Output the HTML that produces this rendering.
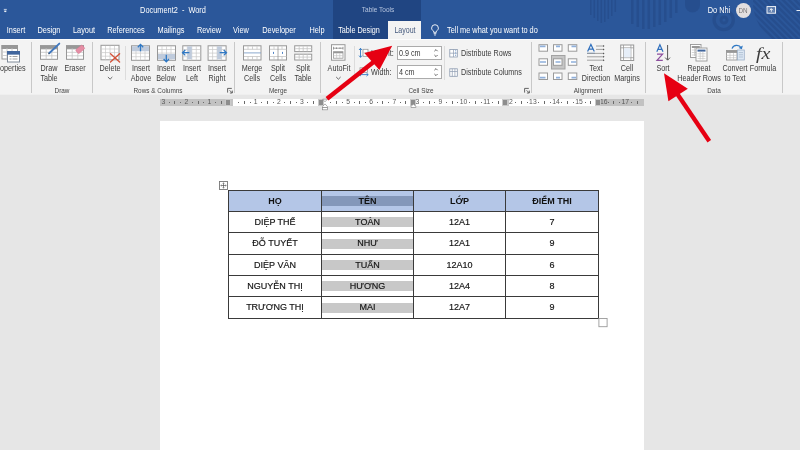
<!DOCTYPE html>
<html>
<head>
<meta charset="utf-8">
<title>Document2 - Word</title>
<style>
*{box-sizing:border-box;margin:0;padding:0}
html,body{width:800px;height:450px;overflow:hidden;background:#e6e6e6;font-family:"Liberation Sans",sans-serif;}
#app{will-change:transform;position:relative;width:800px;height:450px;overflow:hidden;background:#e6e6e6}
.abs{position:absolute}
/* title + tabs */
#title{position:absolute;left:0;top:0;width:800px;height:39.3px;background:#2b579a;overflow:hidden}
#tt{position:absolute;left:333px;top:0;width:88.4px;height:40px;background:#204582}
#laytab{position:absolute;left:388px;top:21px;width:33.4px;height:20px;background:#f3f3f3}
.c{position:absolute;transform:translate(-50%,-50%) scaleX(var(--sx,1));white-space:nowrap;line-height:1}
.l{position:absolute;transform-origin:0 50%;transform:translate(0,-50%) scaleX(var(--sx,1));white-space:nowrap;line-height:1}
.tab{font-size:8.4px;color:#fff;--sx:.878}
.ttl{font-size:8.2px;color:#fff;--sx:.9}
/* ribbon */
#ribbon{position:absolute;left:0;top:39px;width:800px;height:56.4px;background:#f3f3f3;border-bottom:1px solid #efefef;border-top:1.4px solid #fcfcfc}
.rl{font-size:8.2px;color:#3b3b3b;--sx:.88}
.gl{font-size:7.3px;color:#444;--sx:.875}
.sep{position:absolute;width:1px;background:#c8c8c8;top:42px;height:51px}
.sep2{position:absolute;width:1px;background:#dcdcdc;top:46px;height:34px}
.inp{position:absolute;left:397px;width:45px;height:14px;background:#fff;border:1px solid #ababab}
/* ruler */
#ruler{position:absolute;left:160px;top:98.5px;width:484px;height:7.5px;background:#fff}
.rg{position:absolute;top:0;height:7.5px;background:#c2c2c2}
.tk{position:absolute;top:2.2px;width:1px;height:3px;background:#6a6a6a}
.dt{position:absolute;top:3.2px;width:1px;height:1px;background:#6a6a6a}
.mk{position:absolute;top:0;width:6.6px;height:7.5px;background:#c9c9c9}
.mk:after{content:'';position:absolute;left:1.1px;top:1.1px;width:4.4px;height:5.3px;background:#8d8d8d}
.rn{position:absolute;top:3.5px;transform:translate(-50%,-50%);font-size:6.8px;color:#595959;line-height:1}
/* page */
#page{position:absolute;left:160px;top:121px;width:484px;height:340px;background:#fff}
table{position:absolute;left:228px;top:189.6px;border-collapse:collapse;table-layout:fixed;width:371px}
td{border:1px solid #3a3a3a;height:21.33px;text-align:center;vertical-align:middle;font-size:9px;color:#111;padding:1px 0 0 0;position:relative;line-height:1}
tr.h td{background:#b4c6e7;font-weight:bold;-webkit-text-stroke:0}
td{-webkit-text-stroke:0.18px #222}
.band{position:absolute;left:0;right:0;top:5.5px;height:10px;background:#c8c8c8}
tr.h .band{background:#8497b9}
td span{position:relative}
</style>
</head>
<body>
<div id="app">

<!-- ===== title bar / tabs ===== -->
<div id="title">
  <div id="tt"></div>
  <div id="laytab"></div>
</div>
<svg class="abs" style="left:0;top:0" width="800" height="40" viewBox="0 0 800 40">
  <defs><clipPath id="dc"><circle cx="800" cy="2" r="47"/></clipPath></defs>
  <g fill="#254c8b" opacity="0.75">
    <rect x="590" y="0" width="1.6" height="15"/><rect x="593.5" y="0" width="1.6" height="18"/><rect x="597" y="0" width="1.6" height="21"/><rect x="600.5" y="0" width="1.6" height="23"/><rect x="604" y="0" width="1.6" height="22"/><rect x="607.5" y="0" width="1.6" height="19"/><rect x="611" y="0" width="1.6" height="16"/><rect x="614.5" y="0" width="1.6" height="12"/>
    <rect x="631" y="0" width="2.6" height="24"/><rect x="636.5" y="0" width="2.6" height="27"/><rect x="642" y="0" width="2.6" height="29"/><rect x="647.5" y="0" width="2.6" height="29"/><rect x="653" y="0" width="2.6" height="27"/><rect x="658.5" y="0" width="2.6" height="25"/><rect x="664" y="0" width="2.6" height="22"/><rect x="669.5" y="0" width="2.6" height="18"/><rect x="675" y="0" width="2.6" height="13"/>
    <path d="M685 0h15v5a7.5 7.5 0 0 1-15 0z"/>
  </g>
  <g fill="none" stroke="#254c8b" opacity="0.75">
    <circle cx="724" cy="20" r="3" stroke-width="3"/>
    <circle cx="723.7" cy="20" r="9.6" stroke-width="3.4"/>
    <g clip-path="url(#dc)" stroke-width="2.6"><path d="M730 -5l60 60"/><path d="M736 -5l60 60"/><path d="M742 -5l60 60"/><path d="M748 -5l60 60"/><path d="M754 -5l60 60"/><path d="M760 -5l60 60"/><path d="M766 -5l60 60"/><path d="M772 -5l60 60"/><path d="M778 -5l60 60"/><path d="M784 -5l60 60"/><path d="M790 -5l60 60"/><path d="M796 -5l60 60"/></g>
  </g>
</svg>
<div class="c ttl" style="left:173.3px;top:10.8px">Document2&nbsp; -&nbsp; Word</div>
<div class="c" style="left:378px;top:10px;font-size:7.3px;color:#b6c5df;--sx:.89">Table Tools</div>
<div class="c ttl" style="left:718.5px;top:10.5px">Do Nhi</div>
<div class="abs" style="left:735.5px;top:3px;width:15px;height:15px;border-radius:50%;background:#e3dfdf"></div>
<div class="c" style="left:743px;top:10.7px;font-size:6.3px;color:#7a7777">DN</div>

<div class="c tab" style="left:16px;top:30px">Insert</div>
<div class="c tab" style="left:49px;top:30px">Design</div>
<div class="c tab" style="left:84px;top:30px">Layout</div>
<div class="c tab" style="left:126px;top:30px">References</div>
<div class="c tab" style="left:170.5px;top:30px">Mailings</div>
<div class="c tab" style="left:208.5px;top:30px">Review</div>
<div class="c tab" style="left:241px;top:30px">View</div>
<div class="c tab" style="left:279px;top:30px">Developer</div>
<div class="c tab" style="left:317px;top:30px">Help</div>
<div class="c tab" style="left:359.3px;top:30px;--sx:.86">Table Design</div>
<div class="c tab" style="left:404.5px;top:30.2px;color:#44587c;--sx:.84">Layout</div>
<div class="l tab" style="left:446.8px;top:30px">Tell me what you want to do</div>

<!-- ===== ribbon ===== -->
<div id="ribbon"></div>
<!-- ribbon separators -->
<div class="sep" style="left:31px"></div>
<div class="sep" style="left:92px"></div>
<div class="sep" style="left:234px"></div>
<div class="sep" style="left:320px"></div>
<div class="sep" style="left:531px"></div>
<div class="sep" style="left:645px"></div>
<div class="sep" style="left:782px"></div>
<div class="sep2" style="left:125px"></div>
<div class="sep2" style="left:354px"></div>
<div class="sep2" style="left:444px"></div>

<div class="inp" style="top:46px"></div>
<div class="inp" style="top:65.2px"></div>
<!-- ribbon icons -->
<svg class="abs" style="left:0;top:0" width="800" height="100" viewBox="0 0 800 100">
<defs>
  <g id="grid">
    <rect x="0.5" y="0.5" width="18" height="14.5" fill="#fff" stroke="#979797" stroke-width="1"/>
    <path d="M5 1V15M9.5 1V15M14 1V15M1 4.2H18M1 7.8H18M1 11.4H18" stroke="#c8c8c8" stroke-width="0.7" fill="none"/>
  </g>
  <g id="hgrid">
    <rect x="0.5" y="0.5" width="17" height="13.5" fill="#fff" stroke="#979797" stroke-width="1"/>
    <rect x="0.5" y="0.5" width="17" height="3" fill="#979797" stroke="#979797" stroke-width="1"/>
    <path d="M6.2 3V14M11.8 3V14M1 7H17M1 10.5H17" stroke="#c4c4c4" stroke-width="0.8" fill="none"/>
  </g>
  <g id="al">
    <rect x="0.5" y="0.5" width="8.5" height="6.5" fill="#fff" stroke="#9a9a9a" stroke-width="1"/>
  </g>
</defs>

<!-- Properties -->
<g transform="translate(1.5,45)">
  <rect x="0.5" y="0.5" width="15.5" height="13.5" fill="#fff" stroke="#979797"/>
  <rect x="0.5" y="0.5" width="15.5" height="3" fill="#979797" stroke="#979797"/>
  <path d="M5.5 3V14M10.5 3V14M1 7H16M1 10.5H16" stroke="#c4c4c4" stroke-width="0.8"/>
  <rect x="6" y="6.5" width="12" height="10.5" fill="#fff" stroke="#7f8a99"/>
  <rect x="6" y="6.5" width="12" height="2.6" fill="#41669d" stroke="#41669d"/>
  <path d="M8 11.5H10M11 11.5H16M8 14H10M11 14H16" stroke="#979797" stroke-width="0.9"/>
</g>
<!-- Draw Table -->
<use href="#hgrid" x="40" y="45.3"/>
<path d="M59.3 43.6L49.2 53.3" stroke="#4178bf" stroke-width="1.9" stroke-linecap="round"/>
<path d="M48.3 54.3l0.4-1.8 1.3 1.3z" fill="#555"/>
<!-- Eraser -->
<use href="#hgrid" x="66" y="45.3"/>
<g transform="translate(80.2,49.3) rotate(-40)"><rect x="-4.2" y="-2.4" width="8.4" height="4.8" rx="1" fill="#e58ea5" stroke="#d9748f" stroke-width="0.5"/></g>
<!-- Delete -->
<use href="#grid" x="100.5" y="44.8"/>
<path d="M110.5 53.8L119.6 62M119.6 53.8L110.5 62" stroke="#d4533a" stroke-width="1.35" stroke-linecap="round"/>
<path d="M107.9 77l2.2 2.2 2.2-2.2" fill="none" stroke="#555" stroke-width="0.9"/>
<!-- Insert Above -->
<use href="#grid" x="131" y="45.3"/>
<rect x="132" y="46.3" width="17" height="5" fill="#bfcbdc"/>
<path d="M140.5 51.3V44.6M137.8 47.2l2.7-2.8 2.7 2.8" fill="none" stroke="#2f78c4" stroke-width="1.3"/>
<!-- Insert Below -->
<use href="#grid" x="157" y="45.3"/>
<rect x="158" y="54" width="17" height="5.3" fill="#bfcbdc"/>
<path d="M166.3 54.8V61.6M163.6 59l2.7 2.8 2.7-2.8" fill="none" stroke="#2f78c4" stroke-width="1.3"/>
<!-- Insert Left -->
<use href="#grid" x="182.3" y="45.3"/>
<rect x="187.3" y="46.3" width="4.5" height="13" fill="#bfcbdc"/>
<path d="M189.4 52.7H182.6M185.3 50l-2.8 2.7 2.8 2.7" fill="none" stroke="#2f78c4" stroke-width="1.3"/>
<!-- Insert Right -->
<use href="#grid" x="207.6" y="45.3"/>
<rect x="217.1" y="46.3" width="4.5" height="13" fill="#bfcbdc"/>
<path d="M219.6 52.7H226.4M223.7 50l2.8 2.7-2.8 2.7" fill="none" stroke="#2f78c4" stroke-width="1.3"/>
<!-- launchers -->
<g id="ln" fill="none" stroke="#555" stroke-width="0.9">
  <path d="M227.6 92.6V88.4H231.8"/><path d="M229.6 90.3l2.6 2.6M232.3 90.6v2.4h-2.4"/>
</g>
<use href="#ln" x="297" y="0"/>
<!-- Merge Cells -->
<g transform="translate(243,45.3)">
  <rect x="0.5" y="0.5" width="17.5" height="14.2" fill="#fff" stroke="#979797"/>
  <path d="M1 4H18M1 11.2H18M5 1V4M9.5 1V4M14 1V4M5 11.2V15M9.5 11.2V15M14 11.2V15" stroke="#c4c4c4" stroke-width="0.8"/>
  <path d="M1 7.6H18" stroke="#7f9fc8" stroke-width="0.9"/>
</g>
<!-- Split Cells -->
<g transform="translate(269,45.3)">
  <rect x="0.5" y="0.5" width="17" height="14.2" fill="#fff" stroke="#979797"/>
  <path d="M1 4H17.5M1 11.2H17.5M5 1V4M13 1V4M5 11.2V15M13 11.2V15" stroke="#c4c4c4" stroke-width="0.8"/>
  <path d="M9 1V15" stroke="#979797" stroke-width="0.8"/>
  <path d="M4.5 6.6V8.6M13.5 6.6V8.6" stroke="#3b74bd" stroke-width="0.9"/>
</g>
<!-- Split Table -->
<g transform="translate(294.2,45.3)">
  <rect x="0.5" y="0.5" width="17" height="5.8" fill="#fff" stroke="#979797"/>
  <rect x="0.5" y="8.9" width="17" height="5.8" fill="#fff" stroke="#979797"/>
  <path d="M1 3.4H17.5M1 11.8H17.5M5 1V6M9 1V6M13 1V6M5 9V14.5M9 9V14.5M13 9V14.5" stroke="#c4c4c4" stroke-width="0.8"/>
</g>
<!-- AutoFit -->
<g transform="translate(331,44.2)">
  <rect x="0.5" y="0.5" width="13.5" height="15.5" fill="#fff" stroke="#979797"/>
  <path d="M2.5 4H12M2.5 2.6V5.4M12 2.6V5.4M5.5 3.2V4.8M9 3.2V4.8" stroke="#777" stroke-width="0.7"/>
  <rect x="2.5" y="7.5" width="9.5" height="6.5" fill="#fff" stroke="#979797" stroke-width="0.8"/>
  <rect x="2.5" y="7.5" width="9.5" height="1.6" fill="#979797"/>
  <path d="M5.6 9V14M8.8 9V14M2.5 11.5H12" stroke="#c4c4c4" stroke-width="0.7"/>
</g>
<path d="M336.2 77l2.2 2.2 2.2-2.2" fill="none" stroke="#555" stroke-width="0.9"/>
<!-- Height icon -->
<g transform="translate(359,47.8)">
  <rect x="4" y="1.5" width="5" height="7" fill="#fff" stroke="#979797" stroke-width="0.8"/>
  <path d="M4 5H9" stroke="#c4c4c4" stroke-width="0.7"/>
  <path d="M1.5 0.5V9.5M0 2.2L1.5 0.5 3 2.2M0 7.8L1.5 9.5 3 7.8" fill="none" stroke="#2f78c4" stroke-width="0.9"/>
</g>
<!-- Width icon -->
<g transform="translate(359,67.3)">
  <rect x="1" y="0.5" width="7.5" height="4.5" fill="#fff" stroke="#979797" stroke-width="0.8"/>
  <path d="M4.8 0.5V5" stroke="#c4c4c4" stroke-width="0.7"/>
  <path d="M0.3 7.3H9.2M2 5.8L0.3 7.3 2 8.8M7.5 5.8L9.2 7.3 7.5 8.8" fill="none" stroke="#2f78c4" stroke-width="0.9"/>
</g>
<!-- spinners -->
<g fill="none" stroke="#555" stroke-width="0.9">
  <path d="M434.4 51.2l1.6-1.6 1.6 1.6M434.4 55l1.6 1.6 1.6-1.6"/>
  <path d="M434.4 70.2l1.6-1.6 1.6 1.6M434.4 74l1.6 1.6 1.6-1.6"/>
</g>
<!-- Distribute rows/cols -->
<g transform="translate(449.3,49)">
  <rect x="0.5" y="0.5" width="7.5" height="7.5" fill="#fff" stroke="#8c9bb0" stroke-width="0.8"/>
  <path d="M0.5 4.2H8M4.2 0.5V8" stroke="#8c9bb0" stroke-width="0.7"/>
  <path d="M6.3 1.2V7.4" stroke="#6f97cc" stroke-width="0.8" stroke-dasharray="1 0.6"/>
</g>
<g transform="translate(449.3,68.3)">
  <rect x="0.5" y="0.5" width="7.5" height="7.5" fill="#fff" stroke="#8c9bb0" stroke-width="0.8"/>
  <path d="M0.5 3.2H8M3 0.5V8M5.6 0.5V8" stroke="#8c9bb0" stroke-width="0.7"/>
</g>
<!-- Alignment 3x3 -->
<rect x="551.5" y="55.5" width="13.5" height="13.5" fill="#c6c6c6" stroke="#a2a2a2"/>
<g>
  <use href="#al" x="538.5" y="44.2"/><use href="#al" x="553" y="44.2"/><use href="#al" x="567.8" y="44.2"/>
  <use href="#al" x="538.5" y="58.3"/><use href="#al" x="553" y="58.3"/><use href="#al" x="567.8" y="58.3"/>
  <use href="#al" x="538.5" y="72.5"/><use href="#al" x="553" y="72.5"/><use href="#al" x="567.8" y="72.5"/>
</g>
<g stroke="#8fb0dc" stroke-width="1.7">
  <path d="M540 46.3H545.5M556 46.3H560M571.5 46.3H576.2"/>
  <path d="M540 62H546M555.5 62H560.5M571 62H576.2"/>
  <path d="M540 77.6H545.5M556 77.6H560M571.5 77.6H576.2"/>
</g>
<!-- Text Direction -->
<g>
  <path d="M587.6 51.6L590.9 44.5L594.3 51.6M588.8 49.2H593" fill="none" stroke="#2f6fbd" stroke-width="1.2"/>
  <path d="M587 53.3H595" stroke="#2f6fbd" stroke-width="0.8"/>
  <path d="M596 46H603.5M596 49.4H603.5M587 53.4H603.5M587 56.8H603.5M587 60.2H603.5" stroke="#979797" stroke-width="0.9"/>
  <path d="M603 45l1.6 1-1.6 1zM603 48.4l1.6 1-1.6 1zM603 52.4l1.6 1-1.6 1zM603 55.8l1.6 1-1.6 1zM603 59.2l1.6 1-1.6 1z" fill="#555"/>
</g>
<!-- Cell Margins -->
<g transform="translate(620.2,44.5)">
  <rect x="0.5" y="0.5" width="13" height="15.5" fill="#fff" stroke="#979797"/>
  <path d="M3.3 0.5V16M10.7 0.5V16M0.5 3.3H13.5M0.5 13.2H13.5" stroke="#9a9a9a" stroke-width="0.8"/>
  <rect x="3.7" y="3.7" width="6.6" height="9.1" fill="#e6eef8"/>
</g>
<!-- Sort -->
<g>
  <path d="M656.8 51.8L659.9 44.8L663 51.8M658 49.4H661.8" fill="none" stroke="#2f6fbd" stroke-width="1.2"/>
  <path d="M657 54.2H662.6L657 60.3H662.8" fill="none" stroke="#8d4f9e" stroke-width="1.2"/>
  <path d="M667.6 45V60M665.2 57.6l2.4 2.6 2.4-2.6" fill="none" stroke="#555" stroke-width="1"/>
</g>
<!-- Repeat Header Rows -->
<g transform="translate(690,44)">
  <rect x="0.5" y="0.5" width="10.5" height="13" fill="#fff" stroke="#979797" stroke-width="0.9"/>
  <rect x="1.8" y="2" width="8" height="2" fill="#979797"/>
  <path d="M1.8 6H9.8M1.8 8.5H9.8M1.8 11H9.8M4.5 4V12M7.2 4V12" stroke="#c4c4c4" stroke-width="0.7"/>
  <rect x="6" y="4" width="11" height="13" fill="#fff" stroke="#979797" stroke-width="0.9"/>
  <rect x="7.5" y="5.6" width="8" height="2" fill="#41669d"/>
  <path d="M7.5 9.8H15.5M7.5 12.2H15.5M7.5 14.6H15.5M10.2 7.6V15.6M12.9 7.6V15.6" stroke="#c4c4c4" stroke-width="0.7"/>
</g>
<!-- Convert to Text -->
<g transform="translate(726,44)">
  <rect x="0.5" y="6.5" width="10.5" height="9.5" fill="#fff" stroke="#979797" stroke-width="0.9"/>
  <rect x="0.5" y="6.5" width="10.5" height="2.4" fill="#979797"/>
  <path d="M0.5 11.3H11M0.5 13.7H11M4 9V16M7.5 9V16" stroke="#c4c4c4" stroke-width="0.7"/>
  <rect x="11.5" y="6" width="6.8" height="10" fill="#dde8f4" stroke="#9fb1c8" stroke-width="0.8"/>
  <path d="M12.8 8.6H17M12.8 10.8H17M12.8 13H17" stroke="#9fb1c8" stroke-width="0.7"/>
  <path d="M6 4.6C7.5 0.8 13 0.2 15.3 4" fill="none" stroke="#2f78c4" stroke-width="1.2"/>
  <path d="M16.8 1.6L15.9 5.2 12.6 4z" fill="#2f78c4"/>
</g>
<!-- Formula fx -->
<text x="756" y="58.6" font-family="Liberation Serif, serif" font-style="italic" font-size="17.5" fill="#3d3d3d" textLength="14.5" lengthAdjust="spacingAndGlyphs">fx</text>
</svg>

<!-- ribbon labels -->
<div class="l rl" style="left:0px;top:69.3px">operties</div>
<div class="c rl" style="left:49.3px;top:69.3px">Draw</div>
<div class="c rl" style="left:49.3px;top:78.7px">Table</div>
<div class="c rl" style="left:75.1px;top:69.3px">Eraser</div>
<div class="c rl" style="left:110.2px;top:69.3px">Delete</div>
<div class="c rl" style="left:140.7px;top:69.3px">Insert</div>
<div class="c rl" style="left:140.7px;top:78.7px">Above</div>
<div class="c rl" style="left:166.2px;top:69.3px">Insert</div>
<div class="c rl" style="left:166.2px;top:78.7px">Below</div>
<div class="c rl" style="left:191.7px;top:69.3px">Insert</div>
<div class="c rl" style="left:191.7px;top:78.7px">Left</div>
<div class="c rl" style="left:217.2px;top:69.3px">Insert</div>
<div class="c rl" style="left:217.2px;top:78.7px">Right</div>
<div class="c rl" style="left:252px;top:69.3px">Merge</div>
<div class="c rl" style="left:252px;top:78.7px">Cells</div>
<div class="c rl" style="left:277.6px;top:69.3px">Split</div>
<div class="c rl" style="left:277.6px;top:78.7px">Cells</div>
<div class="c rl" style="left:303.2px;top:69.3px">Split</div>
<div class="c rl" style="left:303.2px;top:78.7px">Table</div>
<div class="c rl" style="left:338.5px;top:69.3px">AutoFit</div>
<div class="l rl" style="left:370.5px;top:54.1px">Height:</div>
<div class="l rl" style="left:370.8px;top:73.2px">Width:</div>
<div class="l rl" style="left:398.6px;top:54.1px">0.9 cm</div>
<div class="l rl" style="left:398.6px;top:73.2px">4 cm</div>
<div class="l rl" style="left:460.8px;top:54.1px">Distribute Rows</div>
<div class="l rl" style="left:460.8px;top:73.2px">Distribute Columns</div>
<div class="c rl" style="left:595.5px;top:69.3px">Text</div>
<div class="c rl" style="left:595.5px;top:78.7px">Direction</div>
<div class="c rl" style="left:626.7px;top:69.3px">Cell</div>
<div class="c rl" style="left:626.7px;top:78.7px">Margins</div>
<div class="c rl" style="left:663.4px;top:69.3px">Sort</div>
<div class="c rl" style="left:699px;top:69.3px">Repeat</div>
<div class="c rl" style="left:699px;top:78.7px">Header Rows</div>
<div class="c rl" style="left:735px;top:69.3px">Convert</div>
<div class="c rl" style="left:735px;top:78.7px">to Text</div>
<div class="c rl" style="left:763px;top:69.3px">Formula</div>

<div class="c gl" style="left:61.8px;top:90.5px">Draw</div>
<div class="c gl" style="left:158.2px;top:90.5px">Rows &amp; Columns</div>
<div class="c gl" style="left:277.5px;top:90.5px">Merge</div>
<div class="c gl" style="left:421px;top:90.5px">Cell Size</div>
<div class="c gl" style="left:588.2px;top:90.5px">Alignment</div>
<div class="c gl" style="left:714px;top:90.5px">Data</div>


<!-- ===== ruler ===== -->
<div id="ruler">
  <div class="rg" style="left:0;width:72.5px"></div>
  <div class="rg" style="left:434.5px;width:49.5px"></div>
  <i class="dt" style="left:8.7px"></i><i class="tk" style="left:14.4px"></i><i class="dt" style="left:20.2px"></i><i class="dt" style="left:31.8px"></i><i class="tk" style="left:37.5px"></i><i class="dt" style="left:43.3px"></i><i class="dt" style="left:54.9px"></i><i class="tk" style="left:60.6px"></i><i class="dt" style="left:66.4px"></i><i class="dt" style="left:78.0px"></i><i class="tk" style="left:83.7px"></i><i class="dt" style="left:89.5px"></i><i class="dt" style="left:101.1px"></i><i class="tk" style="left:106.8px"></i><i class="dt" style="left:112.6px"></i><i class="dt" style="left:124.2px"></i><i class="tk" style="left:129.9px"></i><i class="dt" style="left:135.7px"></i><i class="dt" style="left:147.3px"></i><i class="tk" style="left:153.0px"></i><i class="dt" style="left:158.8px"></i><i class="dt" style="left:170.4px"></i><i class="tk" style="left:176.2px"></i><i class="dt" style="left:181.9px"></i><i class="dt" style="left:193.5px"></i><i class="tk" style="left:199.2px"></i><i class="dt" style="left:205.0px"></i><i class="dt" style="left:216.6px"></i><i class="tk" style="left:222.3px"></i><i class="dt" style="left:228.1px"></i><i class="dt" style="left:239.7px"></i><i class="tk" style="left:245.4px"></i><i class="dt" style="left:251.2px"></i><i class="dt" style="left:262.8px"></i><i class="tk" style="left:268.6px"></i><i class="dt" style="left:274.3px"></i><i class="dt" style="left:285.9px"></i><i class="tk" style="left:291.7px"></i><i class="dt" style="left:297.4px"></i><i class="dt" style="left:309.0px"></i><i class="tk" style="left:314.8px"></i><i class="dt" style="left:320.5px"></i><i class="dt" style="left:332.1px"></i><i class="tk" style="left:337.9px"></i><i class="dt" style="left:343.6px"></i><i class="dt" style="left:355.2px"></i><i class="tk" style="left:361.0px"></i><i class="dt" style="left:366.7px"></i><i class="dt" style="left:378.3px"></i><i class="tk" style="left:384.1px"></i><i class="dt" style="left:389.8px"></i><i class="dt" style="left:401.4px"></i><i class="tk" style="left:407.2px"></i><i class="dt" style="left:412.9px"></i><i class="dt" style="left:424.5px"></i><i class="tk" style="left:430.2px"></i><i class="dt" style="left:436.0px"></i><i class="dt" style="left:447.6px"></i><i class="tk" style="left:453.4px"></i><i class="dt" style="left:459.1px"></i><i class="dt" style="left:470.7px"></i><i class="tk" style="left:476.5px"></i>
  <span class="rn" style="left:3.3px">3</span><span class="rn" style="left:26.4px">2</span><span class="rn" style="left:49.5px">1</span><span class="rn" style="left:95.7px">1</span><span class="rn" style="left:118.8px">2</span><span class="rn" style="left:141.9px">3</span><span class="rn" style="left:188.1px">5</span><span class="rn" style="left:211.2px">6</span><span class="rn" style="left:234.3px">7</span><span class="rn" style="left:257.4px">3</span><span class="rn" style="left:280.5px">9</span><span class="rn" style="left:303.6px">10</span><span class="rn" style="left:326.7px">11</span><span class="rn" style="left:350.8px">2</span><span class="rn" style="left:372.9px">13</span><span class="rn" style="left:396.0px">14</span><span class="rn" style="left:419.1px">15</span><span class="rn" style="left:443.7px">16</span><span class="rn" style="left:465.3px">17</span>
  <i class="mk" style="left:64.8px"></i>
  <i class="mk" style="left:157.7px"></i>
  <i class="mk" style="left:249.8px"></i>
  <i class="mk" style="left:342.0px"></i>
  <i class="mk" style="left:434.8px"></i>
</div>

<!-- ===== page ===== -->
<div id="page"></div>
<table>
<colgroup><col style="width:93px"><col style="width:92px"><col style="width:92px"><col style="width:93px"></colgroup>
<tr class="h"><td>HỌ</td><td><div class="band"></div><span>TÊN</span></td><td>LỚP</td><td>ĐIỂM THI</td></tr>
<tr><td>DIỆP THẾ</td><td><div class="band"></div><span>TOÀN</span></td><td>12A1</td><td>7</td></tr>
<tr><td>ĐỖ TUYẾT</td><td><div class="band"></div><span>NHƯ</span></td><td>12A1</td><td>9</td></tr>
<tr><td>DIỆP VĂN</td><td><div class="band"></div><span>TUẤN</span></td><td>12A10</td><td>6</td></tr>
<tr><td>NGUYỄN THỊ</td><td><div class="band"></div><span>HƯƠNG</span></td><td>12A4</td><td>8</td></tr>
<tr><td>TRƯƠNG THỊ</td><td><div class="band"></div><span>MAI</span></td><td>12A7</td><td>9</td></tr>
</table>


<!-- table handles / ruler markers / title icons -->
<svg class="abs" style="left:0;top:0;pointer-events:none" width="800" height="450" viewBox="0 0 800 450">
  <!-- lightbulb -->
  <g fill="none" stroke="#fff" stroke-width="0.9">
    <path d="M433.6 32.3v-1.1c-1.3-0.9-2-1.9-2-3.1a3.4 3.4 0 0 1 6.8 0c0 1.2-0.7 2.2-2 3.1v1.1z"/>
    <path d="M433.7 33.7h2.6M434.2 35h1.6"/>
  </g>
  <!-- ribbon display options -->
  <g fill="none" stroke="#fff" stroke-width="0.9">
    <rect x="767" y="6.6" width="8.6" height="6.6" fill="rgba(255,255,255,0.25)"/>
    <path d="M771.3 11.8V8.8M769.7 10.2l1.6-1.6 1.6 1.6" />
  </g>
  <path d="M796.5 10.5H800" stroke="#fff" stroke-width="0.9"/>
  <path d="M3.8 9.4h3M4.3 10.9l1 1.2 1-1.2z" stroke="#fff" stroke-width="0.7" fill="#fff"/>
  <!-- table move handle -->
  <rect x="219.5" y="181.5" width="8" height="8" fill="#fff" stroke="#777" stroke-width="0.9"/>
  <path d="M223.5 182.8V188.2M220.8 185.5H226.2" stroke="#555" stroke-width="0.7"/><path d="M222.7 183.6l.8-.9.8.9M222.7 187.4l.8.9.8-.9M221.6 184.7l-.9.8.9.8M225.4 184.7l.9.8-.9.8" fill="none" stroke="#555" stroke-width="0.5"/>
  <!-- table resize handle -->
  <rect x="598.9" y="318.5" width="8.2" height="8.2" fill="#fff" stroke="#9a9a9a" stroke-width="0.9"/>
  <!-- indent markers -->
  <g fill="#fff" stroke="#8a8a8a" stroke-width="0.7">
    <path d="M322.6 99.2h4.8l-2.4 2.6z"/>
    <path d="M322.6 106.5l2.4-2.6 2.4 2.6v1h-4.8z"/>
    <rect x="322.6" y="107.6" width="4.8" height="2.2"/>
    <path d="M411 106.5l2.4-2.6 2.4 2.6v1h-4.8z"/>
  </g>
</svg>

<!-- ===== overlay arrows ===== -->
<svg class="abs" style="left:0;top:0" width="800" height="450" viewBox="0 0 800 450">
  <g fill="#e60012" stroke="none">
    <polygon points="392.2,45.7 364.3,53.1 379.4,70"/>
    <polygon points="325.6,96.9 328.4,100.4 375.9,62.9 373.1,59.4"/>
    <polygon points="664,73.2 668.4,101.2 687.8,88.8"/>
    <polygon points="707.5,142.4 711.1,140 679.3,93 675.7,95.4"/>
  </g>
</svg>

</div>
</body>
</html>
